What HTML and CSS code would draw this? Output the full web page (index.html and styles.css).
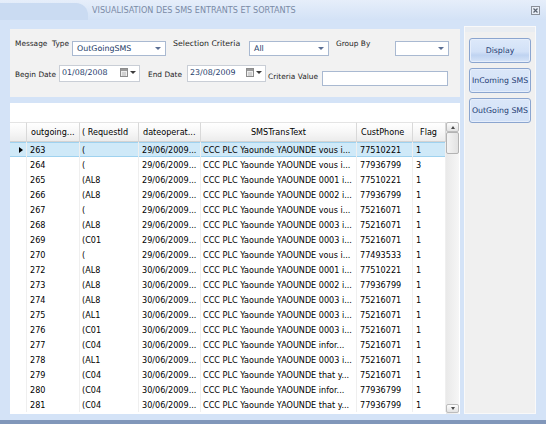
FILE: index.html
```
<!DOCTYPE html>
<html>
	<head>
		<meta charset="utf-8"/>
		<title>Visualisation des SMS</title>
		<link rel="stylesheet" href="styles.css">
	</head>
	<body>
		<div class="window">
			<div class="titlebar">
				<div class="title-tab"></div>
				<span class="title">VISUALISATION DES SMS ENTRANTS ET SORTANTS</span>
				<svg class="close" width="9" height="9" viewBox="0 0 9 9">
					<rect x="0.5" y="0.5" width="8" height="8" fill="#e8eef7" stroke="#8a8f98"/>
					<path d="M2.5 2.5 L6.5 6.5 M6.5 2.5 L2.5 6.5" stroke="#5b6370" stroke-width="1.2"/>
				</svg>
			</div>

			<div class="content">
				<div class="main">
					<div class="filters">
						<div class="frow">
							<span class="lbl lbl-type">Message&nbsp;&nbsp;Type</span>
							<div class="combo combo-type"><span>OutGoingSMS</span><i class="arrow"></i></div>
							<span class="lbl lbl-crit">Selection Criteria</span>
							<div class="combo combo-crit"><span>All</span><i class="arrow"></i></div>
							<span class="lbl lbl-group">Group By</span>
							<div class="combo combo-group"><span></span><i class="arrow"></i></div>
						</div>
						<div class="frow">
							<span class="lbl lbl-begin">Begin Date</span>
							<div class="date date-begin">
								<span>01/08/2008</span>
								<svg class="cal" width="8" height="9" viewBox="0 0 8 9">
									<rect x="0.5" y="0.5" width="7" height="8" fill="#eeeeee" stroke="#8c8c8c"/>
									<rect x="1" y="1" width="6" height="2" fill="#9a9a9a"/>
									<path d="M2 5h4M2 7h4" stroke="#b4b4b4"/>
								</svg>
								<i class="arrow dark"></i>
							</div>
							<span class="lbl lbl-end">End Date</span>
							<div class="date date-end">
								<span>23/08/2009</span>
								<svg class="cal" width="8" height="9" viewBox="0 0 8 9">
									<rect x="0.5" y="0.5" width="7" height="8" fill="#eeeeee" stroke="#8c8c8c"/>
									<rect x="1" y="1" width="6" height="2" fill="#9a9a9a"/>
									<path d="M2 5h4M2 7h4" stroke="#b4b4b4"/>
								</svg>
								<i class="arrow dark"></i>
							</div>
							<span class="lbl lbl-value">Criteria Value</span>
							<div class="textbox"></div>
						</div>
					</div>

					<div class="grid">
						<div class="table-wrap">
							<table>
								<colgroup>
									<col class="c-rh"><col class="c-out"><col class="c-req"><col class="c-date"><col class="c-text"><col class="c-phone"><col class="c-flag">
								</colgroup>
								<thead>
									<tr><th></th><th>outgoing...</th><th class="th-req">(&nbsp;RequestId</th><th>dateoperat...</th><th class="th-center">SMSTransText</th><th>CustPhone</th><th class="th-flag">Flag</th></tr>
								</thead>
								<tbody>
									<tr class="sel"><td><i class="current"></i></td><td>263</td><td>(</td><td>29/06/2009...</td><td>CCC PLC Yaounde YAOUNDE vous i...</td><td>77510221</td><td>1</td></tr>
									<tr><td></td><td>264</td><td>(</td><td>29/06/2009...</td><td>CCC PLC Yaounde YAOUNDE vous i...</td><td>77936799</td><td>3</td></tr>
									<tr><td></td><td>265</td><td>(AL8</td><td>29/06/2009...</td><td>CCC PLC Yaounde YAOUNDE 0001 i...</td><td>77510221</td><td>1</td></tr>
									<tr><td></td><td>266</td><td>(AL8</td><td>29/06/2009...</td><td>CCC PLC Yaounde YAOUNDE 0002 i...</td><td>77936799</td><td>1</td></tr>
									<tr><td></td><td>267</td><td>(</td><td>29/06/2009...</td><td>CCC PLC Yaounde YAOUNDE vous i...</td><td>75216071</td><td>1</td></tr>
									<tr><td></td><td>268</td><td>(AL8</td><td>29/06/2009...</td><td>CCC PLC Yaounde YAOUNDE 0003 i...</td><td>75216071</td><td>1</td></tr>
									<tr><td></td><td>269</td><td>(C01</td><td>29/06/2009...</td><td>CCC PLC Yaounde YAOUNDE 0003 i...</td><td>75216071</td><td>1</td></tr>
									<tr><td></td><td>270</td><td>(</td><td>29/06/2009...</td><td>CCC PLC Yaounde YAOUNDE vous i...</td><td>77493533</td><td>1</td></tr>
									<tr><td></td><td>272</td><td>(AL8</td><td>30/06/2009...</td><td>CCC PLC Yaounde YAOUNDE 0001 i...</td><td>77510221</td><td>1</td></tr>
									<tr><td></td><td>273</td><td>(AL8</td><td>30/06/2009...</td><td>CCC PLC Yaounde YAOUNDE 0002 i...</td><td>77936799</td><td>1</td></tr>
									<tr><td></td><td>274</td><td>(AL8</td><td>30/06/2009...</td><td>CCC PLC Yaounde YAOUNDE 0003 i...</td><td>75216071</td><td>1</td></tr>
									<tr><td></td><td>275</td><td>(AL1</td><td>30/06/2009...</td><td>CCC PLC Yaounde YAOUNDE 0003 i...</td><td>75216071</td><td>1</td></tr>
									<tr><td></td><td>276</td><td>(C01</td><td>30/06/2009...</td><td>CCC PLC Yaounde YAOUNDE 0003 i...</td><td>75216071</td><td>1</td></tr>
									<tr><td></td><td>277</td><td>(C04</td><td>30/06/2009...</td><td>CCC PLC Yaounde YAOUNDE infor...</td><td>75216071</td><td>1</td></tr>
									<tr><td></td><td>278</td><td>(AL1</td><td>30/06/2009...</td><td>CCC PLC Yaounde YAOUNDE 0003 i...</td><td>75216071</td><td>1</td></tr>
									<tr><td></td><td>279</td><td>(C04</td><td>30/06/2009...</td><td>CCC PLC Yaounde YAOUNDE that y...</td><td>75216071</td><td>1</td></tr>
									<tr><td></td><td>280</td><td>(C04</td><td>30/06/2009...</td><td>CCC PLC Yaounde YAOUNDE infor...</td><td>77936799</td><td>1</td></tr>
									<tr><td></td><td>281</td><td>(C04</td><td>30/06/2009...</td><td>CCC PLC Yaounde YAOUNDE that y...</td><td>77936799</td><td>1</td></tr>
								</tbody>
							</table>
						</div>
						<div class="vscroll">
							<div class="sb-btn sb-up"><i class="sb-arrow up"></i></div>
							<div class="sb-thumb"></div>
							<div class="sb-track"></div>
							<div class="sb-btn sb-down"><i class="sb-arrow"></i></div>
						</div>
					</div>
				</div>

				<div class="side">
					<div class="side-top"></div>
					<button class="btn btn-default">Display</button>
					<button class="btn">InComing SMS</button>
					<button class="btn">OutGoing SMS</button>
				</div>
			</div>
		</div>
	</body>
</html>
```

FILE: styles.css
```
*{margin:0;padding:0;box-sizing:border-box;}
body{background:#d4e3f7;font-family:"DejaVu Sans",Verdana,sans-serif;}
.window
{
	width:546px;
	height:424px;
	display:flex;
	flex-direction:column;
	background:#d4e3f7;
	border-bottom:4px solid #8197ba;
}
.titlebar
{
	height:20px;
	display:flex;
	align-items:flex-end;
	background:linear-gradient(#e6eefa,#d3e2f6);
}
.title-tab
{
	width:88px;
	height:17px;
	background:#cadbf2;
	border-top-right-radius:12px;
}
.title
{
	align-self:center;
	margin-left:4px;
	font-size:8.1px;
	color:#7a8aa6;
	white-space:nowrap;
}
.close
{
	align-self:center;
	margin-left:auto;
	margin-right:6px;
}
.content
{
	flex:1;
	display:flex;
	gap:4px;
	padding:0 10px 6px;
}
.main
{
	width:450px;
	display:flex;
	flex-direction:column;
}

/* filter panel */
.filters
{
	height:68px;
	margin-top:9px;
	padding:12px 0 0 5px;
	background:#f2f2f2;
}
.frow{display:flex;align-items:flex-start;}
.frow+.frow{margin-top:9px;}
.lbl
{
	font-size:7.4px;
	line-height:10px;
	color:#1e1e1e;
	white-space:nowrap;
}
.frow:first-child .lbl{margin-top:-2px;}
.frow+.frow .lbl{margin-top:5px;}
.lbl-type{width:57px;}
.lbl-crit{width:76px;margin-left:7px;font-size:7.8px;}
.lbl-group{width:59px;margin-left:7px;}
.lbl-begin{width:44px;}
.lbl-end{width:39px;margin-left:8px;}
.frow+.frow .lbl-value{width:54px;margin-left:2px;margin-top:7px;}
.combo,.date
{
	display:flex;
	align-items:center;
	background:#fff;
	font-size:7.9px;
	color:#213a66;
	white-space:nowrap;
}
.combo
{
	height:15px;
	padding-left:4px;
	border:1px solid #a9b9d1;
}
.combo-type{width:94px;}
.combo-crit{width:80px;}
.combo-group{width:54px;}
.date
{
	height:17px;
	padding:0 0 2px 2px;
	border:1px solid #c9ced6;
	color:#243c6a;
}
.date-begin{width:81px;}
.date-end{width:79px;}
.cal{margin-left:auto;}
.arrow
{
	width:0;
	height:0;
	margin-left:auto;
	margin-right:4px;
	border-left:3px solid transparent;
	border-right:3px solid transparent;
	border-top:3px solid #5a6e93;
}
.arrow.dark{margin-left:2px;margin-right:3px;border-top-color:#3c3c3c;}
.textbox
{
	width:126px;
	height:15px;
	margin-top:6px;
	background:#fff;
	border:1px solid #a9b9d1;
}

/* data grid */
.grid
{
	flex:1;
	display:flex;
	margin-top:6px;
	padding-top:19px;
	background:#fff;
}
.table-wrap
{
	width:436px;
	overflow:hidden;
}
table
{
	width:436px;
	table-layout:fixed;
	border-collapse:separate;
	border-spacing:0;
	font-size:8.1px;
	color:#000;
}
.c-rh{width:17px;}
.c-out{width:53px;}
.c-req{width:59px;}
.c-date{width:62px;}
.c-text{width:156px;}
.c-phone{width:56px;}
.c-flag{width:33px;}
th
{
	height:20px;
	padding-left:4px;
	font-weight:normal;
	text-align:left;
	white-space:nowrap;
	overflow:hidden;
	background:linear-gradient(#ffffff,#f7f7f7 50%,#ececec);
	border-top:1px solid #e4e4e4;
	border-right:1px solid #d9d9d9;
	border-bottom:1px solid #d2d2d2;
}
th.th-req{padding-left:2px;}
th.th-center{text-align:center;padding-left:0;}
th.th-flag{padding-left:7px;}
td
{
	height:15px;
	padding-left:3px;
	white-space:nowrap;
	overflow:hidden;
	border-right:1px solid #efefef;
}
td:nth-child(3),td:nth-child(5){padding-left:2px;}
tr.sel td
{
	background:#cfe9f8;
	box-shadow:inset 0 1px #9fd2ef,inset 0 -1px #9fd2ef;
}
.current
{
	display:block;
	width:0;
	height:0;
	margin-left:6px;
	border-top:3.5px solid transparent;
	border-bottom:3.5px solid transparent;
	border-left:4px solid #000;
}
.vscroll
{
	width:13px;
	display:flex;
	flex-direction:column;
	background:linear-gradient(90deg,#e9e9e9,#f6f6f6);
}
.sb-btn
{
	display:flex;
	align-items:center;
	justify-content:center;
	border:1px solid #bcbcbc;
	border-radius:2px;
	background:linear-gradient(#fdfdfd,#e3e3e3);
}
.sb-up{height:10px;}
.sb-down{height:9px;margin-bottom:1px;}
.sb-thumb
{
	height:22px;
	border:1px solid #b3b3b3;
	border-radius:2px;
	background:linear-gradient(90deg,#f4f4f4,#e2e2e2);
}
.sb-track{flex:1;}
.sb-arrow
{
	width:0;
	height:0;
	border-left:2.5px solid transparent;
	border-right:2.5px solid transparent;
	border-top:3px solid #4a4a4a;
}
.sb-arrow.up{border-top:none;border-bottom:3px solid #4a4a4a;}

/* right buttons */
.side
{
	width:72px;
	margin-top:6px;
	display:flex;
	flex-direction:column;
	gap:5px;
	padding:0 4px;
	background:#f0f0f0;
	border:1px solid #f9f9f9;
}
.side-top
{
	height:5px;
	margin:0 -4px 1px;
	background:#e9edf2;
}
.btn
{
	height:25px;
	font-family:"DejaVu Sans",Verdana,sans-serif;
	font-size:7.8px;
	color:#1f3c74;
	background:linear-gradient(#dbe7f9,#d2e1f7);
	border:1px solid #8ba5cf;
	border-radius:3px;
	box-shadow:inset 0 0 0 1px #e6eefb;
}
.btn-default{background:linear-gradient(#dde9fa,#d2e1f7 55%,#bfd3f1 70%,#d6e4f8);}
```
